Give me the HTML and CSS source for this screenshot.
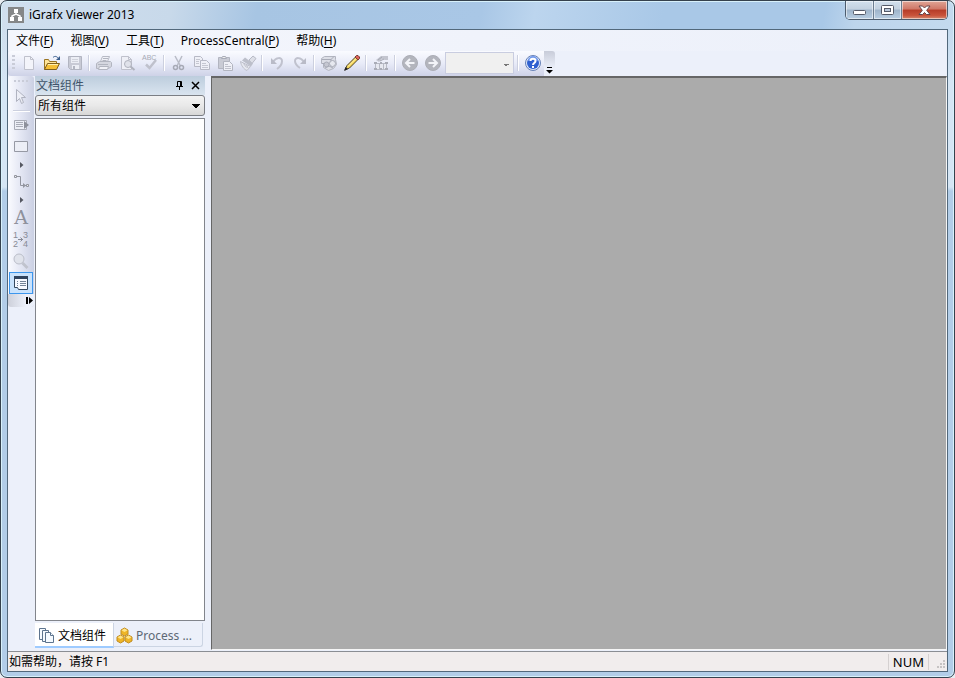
FILE: index.html
```html
<!DOCTYPE html>
<html lang="zh-CN">
<head>
<meta charset="utf-8">
<title>iGrafx Viewer 2013</title>
<link rel="stylesheet" href="styles.css">
</head>
<body>
<div class="window">
  <header class="titlebar">
    <svg class="app-icon" width="16" height="16" viewBox="0 0 16 16"><rect width="16" height="16" fill="#858788"/><path d="M6 2h4v4H6zM2 10h4v4H2zM10 10h4v4h-4z" fill="#fff"/><path d="M8 6v2M4 11V9l4-2 4 2v2" fill="none" stroke="#fff" stroke-width="1.500"/></svg>
    <h1 class="title">iGrafx Viewer 2013</h1>
    <div class="caption-buttons">
      <button class="caption" aria-label="最小化"><svg width="13" height="6" viewBox="0 0 13 6"><rect x=".5" y=".5" width="12" height="4" rx="1" fill="#fff" stroke="#545a68"/></svg></button>
      <button class="caption" aria-label="最大化"><svg width="13" height="11" viewBox="0 0 13 11"><rect x=".5" y=".5" width="12" height="9" rx="1" fill="#fff" stroke="#545a68"/><rect x="3.500" y="3.500" width="6" height="3" fill="#b9c8da" stroke="#545a68"/></svg></button>
      <button class="caption close" aria-label="关闭"><svg width="13" height="11" viewBox="0 0 13 11"><path d="M1 1h3.500l2 2 2-2H12L8.700 5.300 12 9.500H8.500l-2-2-2 2H1l3.300-4.200z" fill="#fff" stroke="#654449"/></svg></button>
    </div>
  </header>

  <div class="client">
    <nav class="menubar">
      <button>文件(<u>F</u>)</button>
      <button>视图(<u>V</u>)</button>
      <button>工具(<u>T</u>)</button>
      <button>ProcessCentral(<u>P</u>)</button>
      <button>帮助(<u>H</u>)</button>
    </nav>

    <div class="toolbar-row">
      <div class="toolbar" role="toolbar" aria-label="标准">
        <span class="grip"></span>
        <button class="tool" aria-label="新建"><svg viewBox="0 0 18 18"><path d="M4.500 2.500h6l3 3v10h-9z" fill="#f3f4fa" stroke="#bfc1cc"/><path d="M10.500 2.500v3h3" fill="none" stroke="#bfc1cc"/></svg></button>
        <button class="tool" aria-label="打开"><svg viewBox="0 0 18 18"><path d="M1.500 15.500v-10h4l1 2h7v3" fill="#ffe59a" stroke="#9a7422"/><path d="M1.500 15.500l3-6h12l-3 6z" fill="#f5bf37" stroke="#80601f"/><path d="M5 10.500h10" stroke="#fff0b0"/><path d="M10 3.500c2-2 4-1 5.500 1" fill="none" stroke="#385c8c"/><path d="M17 2v4h-4z" fill="#385c8c"/></svg></button>
        <button class="tool" aria-label="保存"><svg viewBox="0 0 18 18"><path d="M2.500 2.500h13v13h-11l-2-2z" fill="#c8cad5" stroke="#b2b5c1"/><path d="M5 3h8v6H5zM6 11h7v4H6z" fill="#eceef5"/><path d="M6 5.500h6M6 7.500h6" stroke="#d0d2db"/><path d="M7 12h2v3H7z" fill="#b2b5c1"/></svg></button>
        <span class="sep"></span>
        <button class="tool" aria-label="打印"><svg viewBox="0 0 18 18"><path d="M5.500 7.500l2-5h7l-2 5" fill="#f1f2f8" stroke="#b7bac5"/><path d="M1.500 9.500l3-2h11l1 1v4l-3 2h-12z" fill="#d5d7e0" stroke="#b2b5c0"/><path d="M4.500 12.500h9l-1 3h-9z" fill="#f1f2f8" stroke="#b2b5c0"/><path d="M3 10.500h10M8 4.500h5M7.500 6.500h4" stroke="#b2b5c0"/></svg></button>
        <button class="tool" aria-label="打印预览"><svg viewBox="0 0 18 18"><path d="M3.500 15.500v-13h7l3 3v10z" fill="#eff0f7" stroke="#bfc1cc"/><path d="M10.500 2.500v3h3" fill="none" stroke="#bfc1cc"/><circle cx="10" cy="10" r="3.500" fill="#e0e2ea" stroke="#b0b3be"/><path d="M12.500 12.500l4 3.500" stroke="#b0b3be" stroke-width="2"/></svg></button>
        <button class="tool" aria-label="拼写检查"><svg viewBox="0 0 18 18"><text x="1" y="6" class="abc">ABC</text><path d="M5 10.500l3.500 3.500 6.500-8" fill="none" stroke="#bfc1cc" stroke-width="2.500"/></svg></button>
        <span class="sep"></span>
        <button class="tool" aria-label="剪切"><svg viewBox="0 0 18 18"><path d="M5 2l5.500 10M12 2L7 12" fill="none" stroke="#b8bbc6" stroke-width="1.500"/><circle cx="5.500" cy="13.500" r="2" fill="none" stroke="#a6a9b5" stroke-width="1.500"/><circle cx="11.500" cy="13.500" r="2" fill="none" stroke="#a6a9b5" stroke-width="1.500"/></svg></button>
        <button class="tool" aria-label="复制"><svg viewBox="0 0 18 18"><g fill="#eff0f7" stroke="#b7b9c5"><path d="M1.500 2.500h6l2 2v8h-8z"/><path d="M7.500 6.500h6l3 3v6h-9z"/></g><path d="M3 5.500h4M3 7.500h3M3 9.500h3M9 9.500h4M9 11.500h6M9 13.500h6" stroke="#c5c7d1"/></svg></button>
        <button class="tool" aria-label="粘贴"><svg viewBox="0 0 18 18"><path d="M2.500 3.500h11v11h-11z" fill="#c9cbd5" stroke="#b2b5c0"/><path d="M5.500 4.500l1-2h3l1 2z" fill="#eee" stroke="#a9acb8"/><path d="M7.500 7.500h6l3 3v6h-9z" fill="#eff0f7" stroke="#b2b5c0"/><path d="M9 10.500h3M9 12.500h6M9 14.500h6" stroke="#bfc1cc"/></svg></button>
        <button class="tool" aria-label="格式刷"><svg viewBox="0 0 18 18"><path d="M10 6l4-4 3 2.500-4 5z" fill="#dddfe7" stroke="#b7bac5"/><path d="M3 6.500l3-3 8 6-2 3z" fill="#bcbfca"/><path d="M1.500 7.500l10 5-3.500 4c-3-1-6-5-6.500-9z" fill="#e6e8ef" stroke="#bec0cb"/><path d="M4.500 9.500l3 4M7.500 11l1.500 3" stroke="#bec0cb"/></svg></button>
        <span class="sep"></span>
        <button class="tool" aria-label="撤消"><svg viewBox="0 0 18 18"><path d="M5 8c3-5 9-5 9-1 0 3-2 6-5 8" fill="none" stroke="#c0c2ce" stroke-width="2"/><path d="M3 4v6h6z" fill="#b9bbc7"/></svg></button>
        <button class="tool" aria-label="重做"><svg viewBox="0 0 18 18"><path d="M13 8C10 3 4 3 4 7c0 3 2 5 5 7" fill="none" stroke="#c0c2ce" stroke-width="2"/><path d="M15 4v6H9z" fill="#b9bbc7"/></svg></button>
        <span class="sep"></span>
        <button class="tool" aria-label="模型"><svg viewBox="0 0 18 18"><path d="M1.500 4.500l3-2h11v3l1 5-3 4-5 2-5-3V9.500h-2z" fill="#dcdee6" stroke="#b2b5c0"/><path d="M2 5.500h9l3-3M11 5v3M2 9.500h6" fill="none" stroke="#a9acb8"/><circle cx="6.500" cy="10.500" r="2.500" fill="#c5c7d1" stroke="#a9acb8"/><circle cx="12.500" cy="9.500" r="3" fill="#e6e8ef" stroke="#a9acb8"/><path d="M5 14l4-2 4 2" fill="none" stroke="#a9acb8"/></svg></button>
        <button class="tool" aria-label="编辑"><svg viewBox="0 0 18 18"><path d="M2 16l2-4.500L12.500 3 15 5.500 6.500 14z" fill="#f5d557" stroke="#4d432c"/><path d="M5 12.500l8.500-8.500" stroke="#fff3b0"/><path d="M12 3l1.500-1.500h1.500L16.500 3v1.500L15 6z" fill="#dd6259" stroke="#773c35"/><path d="M1 17l1.500-4L5 15z" fill="#222"/></svg></button>
        <span class="sep"></span>
        <button class="tool" aria-label="属性"><svg viewBox="0 0 18 18"><path d="M4 6l5-4h7v4h-3l-3-1-3 3z" fill="#c3c5cf"/><path d="M6 6l4-3M8 7l4-2" stroke="#a5a8b3"/><path d="M3.500 9.500h11v6h-11z" fill="#e6e8f0" stroke="#b7bac5"/><path d="M7.500 10v5M11.500 10v5" stroke="#b7bac5"/><path d="M2 8h3v2H2zM8 8h2v2H8zM13 8h3v2h-3zM2 14h3v2H2zM8 14h2v2H8zM13 14h3v2h-3z" fill="#a9acb7"/></svg></button>
        <span class="sep"></span>
        <button class="tool" aria-label="后退"><svg viewBox="0 0 18 18"><circle cx="9" cy="9" r="7.500" fill="#b3b5bd" stroke="#acaeb6"/><path d="M13.500 9H5.500M9 5L5 9l4 4" fill="none" stroke="#f3f4f8" stroke-width="2"/></svg></button>
        <button class="tool" aria-label="前进"><svg viewBox="0 0 18 18"><circle cx="9" cy="9" r="7.500" fill="#b3b5bd" stroke="#acaeb6"/><path d="M4.500 9h8M9 5l4 4-4 4" fill="none" stroke="#f3f4f8" stroke-width="2"/></svg></button>
        <select class="zoom" aria-label="缩放" disabled><option></option></select>
        <span class="sep"></span>
        <button class="tool" aria-label="帮助"><svg viewBox="0 0 18 18"><circle cx="9" cy="9" r="7.500" fill="#dfe8fb" stroke="#6681b6"/><circle cx="9" cy="9" r="6" fill="#2f60d0"/><path d="M4 7a5 5 0 0 1 10 0q-5-2-10 0z" fill="#739aec"/><path d="M6.500 7c0-3 5-3 5 0 0 2-2.500 2-2.500 4M9 12v2" fill="none" stroke="#fff" stroke-width="2"/></svg></button>
      </div>
      <button class="toolbar-end" aria-label="工具栏选项"><svg width="7" height="7" viewBox="0 0 7 7"><path d="M1 0h5v1H1zM0 3h7L3.500 6.500z"/></svg></button>
    </div>

    <main class="workspace">
      <div class="side">
        <div class="toolbox" role="toolbar" aria-label="工具箱" aria-orientation="vertical">
          <span class="hgrip"></span>
          <button class="vtool" aria-label="选择"><svg viewBox="0 0 18 18"><path d="M4.500 1.500v12l3-3 2 5 2-1-2-5h4z" fill="#eceef6" stroke="#b0b3c0"/></svg></button>
          <span class="hsep"></span>
          <button class="vtool" aria-label="图例"><svg viewBox="0 0 18 18"><path d="M2.500 4.500h12v9h-12z" fill="#eceef6" stroke="#a8abb6"/><path d="M4 6.500h7M4 8.500h7M4 10.500h7" stroke="#a8abb6"/><path d="M12 5l5 4-5 4z" fill="#8d909b"/></svg></button>
          <button class="vtool" aria-label="形状"><svg viewBox="0 0 18 18"><path d="M2.500 3.500h13v10h-13z" fill="#eceef6" stroke="#9699a4"/></svg></button>
          <button class="flyout" aria-label="更多形状"><svg width="4" height="6" viewBox="0 0 4 6"><path d="M0 0l3.500 3L0 6z"/></svg></button>
          <button class="vtool" aria-label="连接线"><svg viewBox="0 0 18 18"><path d="M4 3.500h4.500v9H14" fill="none" stroke="#92959f"/><path d="M2.500 2.500h2v2h-2zM14.500 11.500h2v2h-2z" fill="#eee" stroke="#92959f"/><path d="M11 10l3 2.500-3 2.500z" fill="#92959f"/></svg></button>
          <button class="flyout" aria-label="更多连接线"><svg width="4" height="6" viewBox="0 0 4 6"><path d="M0 0l3.500 3L0 6z"/></svg></button>
          <button class="vtool letter" aria-label="文本">A</button>
          <button class="vtool" aria-label="编号"><svg viewBox="0 0 18 18" class="digits"><text x="1" y="8">1</text><text x="1" y="17">2</text><text x="11" y="8">3</text><text x="11" y="17">4</text><path d="M6 9.500h5M8.500 7.500l2 2-2 2" fill="none" stroke="#888b96"/></svg></button>
          <button class="vtool" aria-label="放大镜"><svg viewBox="0 0 18 18"><circle cx="7" cy="7" r="5" fill="#e0e3eb" stroke="#bbbec9"/><path d="M10.500 11l5 5" stroke="#c0c3cd" stroke-width="3"/></svg></button>
          <button class="vtool selected" aria-label="组件窗口" aria-pressed="true"><svg viewBox="0 0 18 18"><path d="M2.500 2.500h13v13h-9l-1-2h-3z" fill="#f7f9ff" stroke="#35475d"/><path d="M2 2h14v3H2z" fill="#30435d"/><path d="M5 7.500h1M8 7.500h6M5 9.500h1M8 9.500h6M5 11.500h1M8 11.500h6" stroke="#748397"/></svg></button>
          <button class="toolbox-end" aria-label="工具箱选项"><svg width="7" height="7" viewBox="0 0 7 7"><path d="M0 0h2v7H0zM3 0l4 3.500L3 7z"/></svg></button>
        </div>

        <section class="panel">
          <header class="panel-head">
            <h2>文档组件</h2>
            <button aria-label="自动隐藏"><svg width="9" height="9" viewBox="0 0 9 9"><path d="M2.500 5V.500h4V5M5.500 1v4M1 5.500h7M4.500 6v3" fill="none" stroke="#000"/></svg></button>
            <button aria-label="关闭面板"><svg width="9" height="9" viewBox="0 0 9 9"><path d="M1 1l7 7M8 1L1 8" stroke="#000" stroke-width="1.500"/></svg></button>
          </header>
          <select class="filter" aria-label="组件筛选"><option>所有组件</option></select>
          <div class="list"></div>
          <div class="tabs" role="tablist">
            <button class="tab active" role="tab" aria-selected="true"><svg width="17" height="17" viewBox="0 0 17 17"><g fill="#f5faff" stroke="#5d748e"><path d="M1.500 1.500h6v11h-6z"/><path d="M4.500 3.500h6v11h-6z"/><path d="M7.500 5.500h5l3 3v7h-8z"/><path d="M12.500 5.500v3h3"/></g></svg>文档组件</button>
            <button class="tab" role="tab" aria-selected="false"><svg width="17" height="17" viewBox="0 0 17 17"><g fill="#efb526" stroke="#c08c22"><path d="M5 3l3.500-2L12 3v4L8.500 9 5 7z"/><path d="M1 10l3.500-2L8 10v4l-3.500 2L1 14z"/><path d="M9 10l3.500-2 3.500 2v4l-3.500 2L9 14z"/></g><path d="M5.500 3.200L8.500 1.500l3 1.700L8.500 5zM1.500 10.200l3-1.700 3 1.700-3 1.800zM9.500 10.200l3-1.700 3 1.700-3 1.800z" fill="#ffe58a"/></svg>Process ...</button>
          </div>
        </section>
      </div>
      <div class="canvas"></div>
    </main>

    <footer class="status">
      <span class="hint">如需帮助，请按 F1</span>
      <span class="num">NUM</span>
      <svg class="resize" width="12" height="12" viewBox="0 0 12 12"><path d="M8 1h2v2H8zM5 4h2v2H5zM8 4h2v2H8zM2 7h2v2H2zM5 7h2v2H5zM8 7h2v2H8z" fill="#c6c3c3"/></svg>
    </footer>
  </div>
</div>
</body>
</html>
```
FILE: styles.css
```css
* { box-sizing: border-box; }

body {
  margin: 0;
  background: #e8edf2;
  color: #000;
  font: 12px/16px "Noto Sans", "Noto Sans CJK SC", sans-serif;
}

button, select { font: inherit; color: inherit; }
button { padding: 0; border: 0; background: none; }
h1, h2 { margin: 0; font: inherit; }
svg { display: block; }

.window {
  display: flex;
  flex-direction: column;
  height: 100vh;
  padding: 0 6px 5px;
  border: 1px solid #35414d;
  border-radius: 7px;
  box-shadow: inset 0 0 0 1px #d8f1fb;
  background: linear-gradient(180deg, transparent 28px, #d5e5f4 80px, #d5e5f4 186px, #b2cde8 190px), linear-gradient(100deg, #d0dfee 0, #c8d9ea 16%, #a7c5e3 24%, #a9c7e6 45%, #bcd5ee 50%, #a9c8e7 62%, #a9c8e7 77%, #bdd5ec 80%, #cbe0f1 100%);
}

.titlebar {
  display: flex;
  flex: 0 0 28px;
  align-items: flex-start;
}
.app-icon { margin: 6px 5px 0 1px; }
.title { flex: 1; padding-top: 6px; }

.caption-buttons {
  display: flex;
  border: 1px solid #4c5c6d;
  border-top: 0;
  border-radius: 0 0 5px 5px;
  overflow: hidden;
}
.caption {
  display: flex;
  align-items: center;
  justify-content: center;
  width: 28px;
  height: 18px;
  border-right: 1px solid #6c7e90;
  box-shadow: inset 0 0 0 1px #ffffff88;
  background: linear-gradient(#d2e0ed, #c3d1df 45%, #9eb4ca 50%, #b9cfe3);
}
.caption:first-child { padding-top: 6px; }
.caption.close {
  width: 45px;
  border: 0;
  background: linear-gradient(#e0a596, #cf7767 45%, #b63c28 50%, #c9533b 80%, #d58a70);
}

.client {
  display: flex;
  flex: 1;
  flex-direction: column;
  min-height: 0;
  border: 1px solid #52687b;
  background: #ecf0fa;
}

.menubar {
  display: flex;
  flex: 0 0 21px;
  gap: 17px;
  padding-left: 8px;
  background: linear-gradient(90deg, #f4f6fc, #ecf0fa);
}
.menubar u { text-underline-offset: 2px; }

.toolbar-row { display: flex; flex: 0 0 25px; }
.toolbar {
  display: flex;
  align-items: center;
  padding: 0 0 1px 2px;
  border-radius: 3px 0 0 3px;
  background: linear-gradient(#fafbff, #e8ebf8 50%, #ced2e7);
}
.grip {
  width: 3px;
  height: 16px;
  margin: 0 2px;
  background: repeating-linear-gradient(#c9ccd8 0 2px, transparent 2px 4px);
}
.tool {
  display: flex;
  align-items: center;
  justify-content: center;
  width: 23px;
  height: 23px;
}
.tool svg, .vtool svg { width: 18px; height: 18px; }
.abc { fill: #a6a9b4; font: 7px "Liberation Sans", sans-serif; }
.sep {
  width: 2px;
  height: 16px;
  margin: 0 2px;
  border-left: 1px solid #ccd0df;
  border-right: 1px solid #fff;
}
.zoom {
  width: 69px;
  height: 22px;
  margin: 0 1px;
  appearance: none;
  border: 1px solid #c9cde0;
  border-radius: 0;
  opacity: 1;
  background: linear-gradient(45deg, transparent 50%, #777 50%) 57px 11px / 3px 3px no-repeat, linear-gradient(-45deg, transparent 50%, #777 50%) 60px 11px / 3px 3px no-repeat, #f0f0f0;
}
.toolbar-end {
  display: flex;
  align-items: flex-end;
  justify-content: center;
  width: 11px;
  padding-bottom: 2px;
  border-radius: 0 3px 0 0;
  background: linear-gradient(#c8ccd9, #ecf0fa 70%);
}

.workspace { display: flex; flex: 1; min-height: 0; }
.side {
  display: flex;
  flex: 0 0 197px;
  gap: 1px;
}
.toolbox {
  display: flex;
  flex: 0 0 26px;
  flex-direction: column;
  align-items: center;
  align-self: flex-start;
  border-radius: 3px;
  background: linear-gradient(90deg, #fafbff, #e3e6f3 50%, #cbd0e3);
}
.hgrip {
  width: 15px;
  height: 2px;
  margin: 4px 0;
  background: repeating-linear-gradient(90deg, #c9ccd8 0 2px, transparent 2px 4px);
}
.vtool {
  display: flex;
  align-items: center;
  justify-content: center;
  width: 24px;
  height: 22px;
}
.hsep {
  width: 17px;
  height: 2px;
  margin: 2px 0;
  border-top: 1px solid #ccd0df;
  border-bottom: 1px solid #fff;
}
.flyout {
  display: flex;
  align-items: center;
  justify-content: center;
  width: 24px;
  height: 13px;
  padding-left: 2px;
  fill: #555862;
}
.letter { color: #8e919c; font: 19px/22px "DejaVu Serif", serif; }
.digits text { fill: #888b96; font: 9px "Liberation Sans", sans-serif; }
.selected { border: 1px solid #3c96ed; background: #c9e2fc; }
.toolbox-end {
  display: flex;
  align-items: center;
  justify-content: flex-end;
  width: 26px;
  height: 13px;
  padding-right: 1px;
  border-radius: 0 0 3px 3px;
  background: linear-gradient(90deg, #cdd0da, #ecf0fa 70%);
}

.panel {
  display: flex;
  flex: 1;
  flex-direction: column;
  min-width: 0;
}
.panel-head {
  display: flex;
  align-items: center;
  flex: 0 0 19px;
  gap: 7px;
  padding: 0 5px 0 1px;
  background: linear-gradient(#bdcddd, #d9e4ef);
}
.panel-head h2 { flex: 1; color: #40546a; }
.filter {
  height: 21px;
  width: 100%;
  padding: 0 2px;
  appearance: none;
  border: 1px solid #7b7e84;
  border-radius: 3px;
  background: linear-gradient(45deg, transparent 50%, #000 50%) right 8px top 8px / 4px 4px no-repeat, linear-gradient(-45deg, transparent 50%, #000 50%) right 4px top 8px / 4px 4px no-repeat, linear-gradient(#f3f3f3, #e9e9e9 50%, #d7d7d7);
}
.list {
  flex: 1;
  margin-top: 2px;
  border: 1px solid #82858c;
  background: #fff;
}
.tabs {
  display: flex;
  flex: 0 0 25px;
  margin: 2px 2px 3px 0;
}
.tab {
  display: flex;
  align-items: center;
  flex: 1;
  gap: 3px;
  height: 24px;
  padding: 2px 0 0 2px;
  border: 1px solid #cbd4e3;
  border-top: 0;
  border-left: 0;
  border-radius: 0 0 3px 0;
  color: #5d6875;
  white-space: nowrap;
}
.tab.active {
  flex: 0 0 79px;
  height: 25px;
  padding-left: 3px;
  border-bottom: 2px solid #9ecbff;
  border-radius: 0;
  background: #fff;
  color: #000;
}

.canvas {
  flex: 1;
  margin: 0 0 1px 6px;
  border: 2px solid #666;
  border-right: 1px solid #f5f5f5;
  border-bottom: 1px solid #f5f5f5;
  border-left-width: 1px;
  background: #ababab;
}

.status {
  display: flex;
  align-items: center;
  flex: 0 0 20px;
  border-top: 1px solid #8b8e94;
  background: #f1eded;
}
.hint { flex: 1; padding-left: 1px; }
.num {
  padding: 0 4px;
  border-left: 1px solid #d5d1d1;
  border-right: 1px solid #d5d1d1;
  font-size: 13px;
}
.resize { margin: 6px 0 0 6px; }
```
